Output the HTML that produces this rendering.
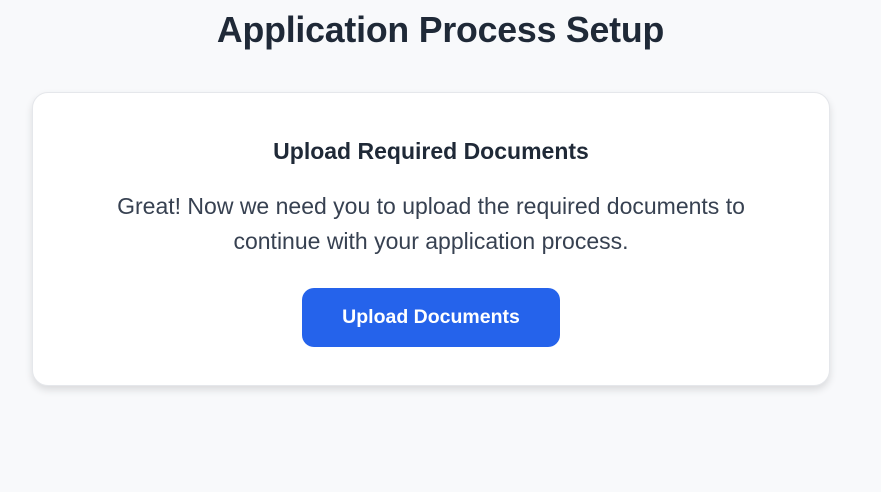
<!DOCTYPE html>
<html><head><style>
html,body{margin:0;padding:0;}
body{width:881px;height:492px;background:#f8f9fb;font-family:"Liberation Sans",Arial,sans-serif;color:#1f2937;position:relative;overflow:hidden;}
h1{position:absolute;top:8px;left:0;width:881px;text-align:center;margin:0;font-size:35.7px;font-weight:bold;line-height:44px;color:#1f2937;letter-spacing:-0.2px;}
.card{position:absolute;left:32px;top:92px;width:796px;height:292px;background:#fff;border:1px solid #e5e7eb;border-radius:16px;box-shadow:0 4px 8px rgba(0,0,0,0.12);}
h2{position:absolute;top:44px;left:0;width:100%;text-align:center;margin:0;font-size:23px;font-weight:bold;line-height:28px;color:#1f2937;}
p{position:absolute;top:96px;left:0;width:796px;text-align:center;margin:0;font-size:23px;line-height:35px;color:#374151;}
.btn{position:absolute;left:269px;top:195px;width:258px;height:59px;background:#2563eb;border-radius:12px;color:#fff;font-weight:bold;font-size:19.5px;line-height:59px;text-align:center;}
</style></head><body>
<h1>Application Process Setup</h1>
<div class="card">
<h2>Upload Required Documents</h2>
<p>Great! Now we need you to upload the required documents to<br>continue with your application process.</p>
<div class="btn">Upload Documents</div>
</div>
</body></html>
